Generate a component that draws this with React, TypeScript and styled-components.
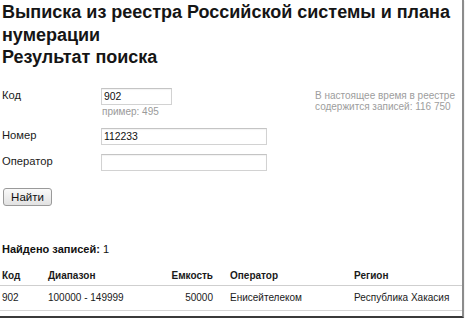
import styled, { createGlobalStyle } from "styled-components";

const GlobalStyle = createGlobalStyle`
  html, body {
    margin: 0;
    padding: 0;
    background: #fff;
  }
  body {
    font-family: "Liberation Sans", Arial, sans-serif;
    color: #111;
  }
`;

type Row = {
  code: string;
  range: string;
  capacity: string;
  operator: string;
  region: string;
};

const rows: Row[] = [
  {
    code: "902",
    range: "100000 - 149999",
    capacity: "50000",
    operator: "Енисейтелеком",
    region: "Республика Хакасия",
  },
];

export default function App() {
  return (
    <>
      <GlobalStyle />
      <Frame>
        <Title>
          Выписка из реестра Российской системы и плана нумерации
          <br />
          Результат поиска
        </Title>

        <SearchSection>
          <Fields>
            <Field>
              <Label>Код</Label>
              <Control>
                <Input $width={71} defaultValue="902" />
                <Hint>пример: 495</Hint>
              </Control>
            </Field>
            <Field>
              <Label>Номер</Label>
              <Control>
                <Input $width={166} defaultValue="112233" />
              </Control>
            </Field>
            <Field>
              <Label>Оператор</Label>
              <Control>
                <Input $width={166} defaultValue="" />
              </Control>
            </Field>
          </Fields>
          <Note>
            В настоящее время в реестре
            <br />
            содержится записей: 116 750
          </Note>
        </SearchSection>

        <SubmitButton type="button">Найти</SubmitButton>

        <Found>
          <b>Найдено записей:</b> 1
        </Found>

        <ResultTable>
          <colgroup>
            <col style={{ width: 48 }} />
            <col style={{ width: 110 }} />
            <col style={{ width: 55 }} />
            <col style={{ width: 141 }} />
            <col />
          </colgroup>
          <thead>
            <tr>
              <Th>Код</Th>
              <Th>Диапазон</Th>
              <Th $align="right">Емкость</Th>
              <Th $indent>Оператор</Th>
              <Th>Регион</Th>
            </tr>
          </thead>
          <tbody>
            {rows.map((r) => (
              <tr key={r.code + r.range}>
                <Td>{r.code}</Td>
                <Td>{r.range}</Td>
                <Td $align="right">{r.capacity}</Td>
                <Td $indent>{r.operator}</Td>
                <Td>{r.region}</Td>
              </tr>
            ))}
          </tbody>
        </ResultTable>
      </Frame>
    </>
  );
}

const Frame = styled.div`
  box-sizing: border-box;
  width: 464px;
  height: 318px;
  overflow: hidden;
  border-right: 2px solid #8c8c8c;
  border-bottom: 2px solid #3a3a3a;
  box-shadow: 0 1px 1px rgba(0, 0, 0, 0.25);
`;

const Title = styled.h1`
  margin: 1px 0 0;
  padding-left: 2px;
  font-size: 18px;
  line-height: 22.5px;
  font-weight: bold;
  color: #151515;
`;

const SearchSection = styled.div`
  display: flex;
  justify-content: space-between;
  align-items: flex-start;
  margin-top: 19.5px;
  padding-left: 2px;
`;

const Fields = styled.div`
  display: flex;
  flex-direction: column;
  gap: 9.5px;
`;

const Field = styled.div`
  display: flex;
  align-items: flex-start;
`;

const Label = styled.div`
  width: 99px;
  font-size: 11.2px;
  line-height: 14px;
  color: #1a1a1a;
`;

const Control = styled.div`
  display: flex;
  flex-direction: column;
`;

const Input = styled.input<{ $width: number }>`
  box-sizing: border-box;
  width: ${({ $width }) => $width}px;
  height: 17px;
  margin: 0;
  padding: 0 2px;
  border: 1px solid #d2d2d2;
  border-top-color: #c4c4c4;
  box-shadow: inset 0 1px 1px rgba(0, 0, 0, 0.05);
  font-family: "Liberation Sans", Arial, sans-serif;
  font-size: 10.4px;
  color: #111;
  background: #fff;
  outline: none;
`;

const Hint = styled.div`
  padding-left: 1px;
  font-size: 10px;
  line-height: 13px;
  color: #9a9a9a;
`;

const Note = styled.div`
  margin: 1.5px 7px 0 0;
  font-size: 10px;
  line-height: 11px;
  color: #9d9d9d;
`;

const SubmitButton = styled.button`
  display: block;
  box-sizing: border-box;
  width: 49px;
  height: 18px;
  margin: 17px 0 0 3px;
  padding: 0;
  border: 1px solid #9a9a9a;
  border-radius: 3px;
  background: linear-gradient(#fafafa, #e2e2e2);
  font-family: "Liberation Sans", Arial, sans-serif;
  font-size: 11.5px;
  color: #111;
`;

const Found = styled.div`
  margin-top: 36.5px;
  padding-left: 2px;
  font-size: 11px;
  line-height: 13px;
  color: #111;

  b {
    font-weight: bold;
  }
`;

const ResultTable = styled.table`
  width: 462px;
  margin-top: 7.5px;
  border-collapse: collapse;
  table-layout: fixed;
  font-size: 10px;
`;

const Th = styled.th<{ $align?: "left" | "right"; $indent?: boolean }>`
  padding: 6px 0 3px;
  padding-left: ${({ $indent }) => ($indent ? "17px" : "0")};
  text-align: ${({ $align }) => $align ?? "left"};
  font-weight: bold;
  line-height: 13px;
  color: #1a1a1a;
  border-bottom: 1px solid #cfcfcf;
  white-space: nowrap;

  &:first-child {
    padding-left: 2px;
  }
`;

const Td = styled.td<{ $align?: "left" | "right"; $indent?: boolean }>`
  padding: 5px 0 6px;
  padding-left: ${({ $indent }) => ($indent ? "17px" : "0")};
  text-align: ${({ $align }) => $align ?? "left"};
  line-height: 13px;
  color: #1a1a1a;
  border-bottom: 1px solid #d6d6d6;
  white-space: nowrap;

  &:first-child {
    padding-left: 2px;
  }
`;
